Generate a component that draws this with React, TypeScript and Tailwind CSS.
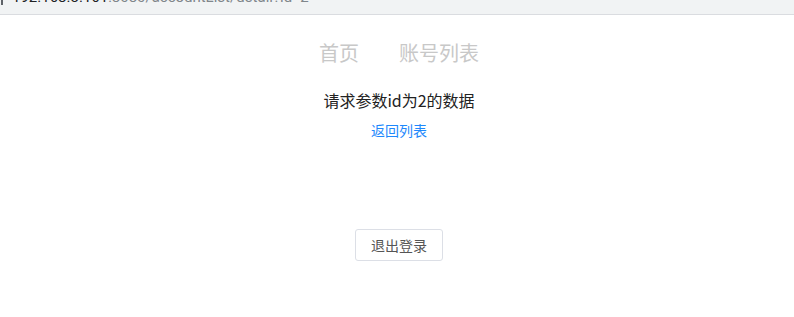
export default function App() {
  return (
    <div className="w-[794px] h-[317px] bg-white overflow-hidden" style={{ fontFamily: '"Noto Sans CJK SC", sans-serif' }}>
      <div className="h-[15px] bg-[#f1f3f4] border-b border-[#dadce0] overflow-hidden relative">
        <div className="absolute left-[1px] top-0 w-[2px] h-[5px] bg-[#5f6368]" />
        <div className="absolute left-[12px] top-[-11px] text-[15px] leading-[16px] whitespace-nowrap" style={{ fontFamily: 'Roboto, sans-serif' }}>
          <span className="text-[#202124]">192.168.3.161</span>
          <span className="text-[#80868b]">:8080/accountList/detail?id=2</span>
        </div>
      </div>
      <div className="flex flex-col items-center pl-[4px]">
        <div className="mt-[26px] flex gap-[40px] text-[20px] leading-[24px] text-[#c8c8c8]">
          <span>首页</span>
          <span>账号列表</span>
        </div>
        <div className="mt-[25px] text-[16px] leading-[20px] text-[#222]">请求参数id为2的数据</div>
        <div className="mt-[11px] text-[14px] leading-[18px] text-[#1e88fc]">返回列表</div>
        <button className="mt-[90px] h-[32px] px-[15px] border border-[#dcdfe6] rounded-[3px] text-[14px] leading-[14px] text-[#555] bg-white">退出登录</button>
      </div>
    </div>
  );
}
